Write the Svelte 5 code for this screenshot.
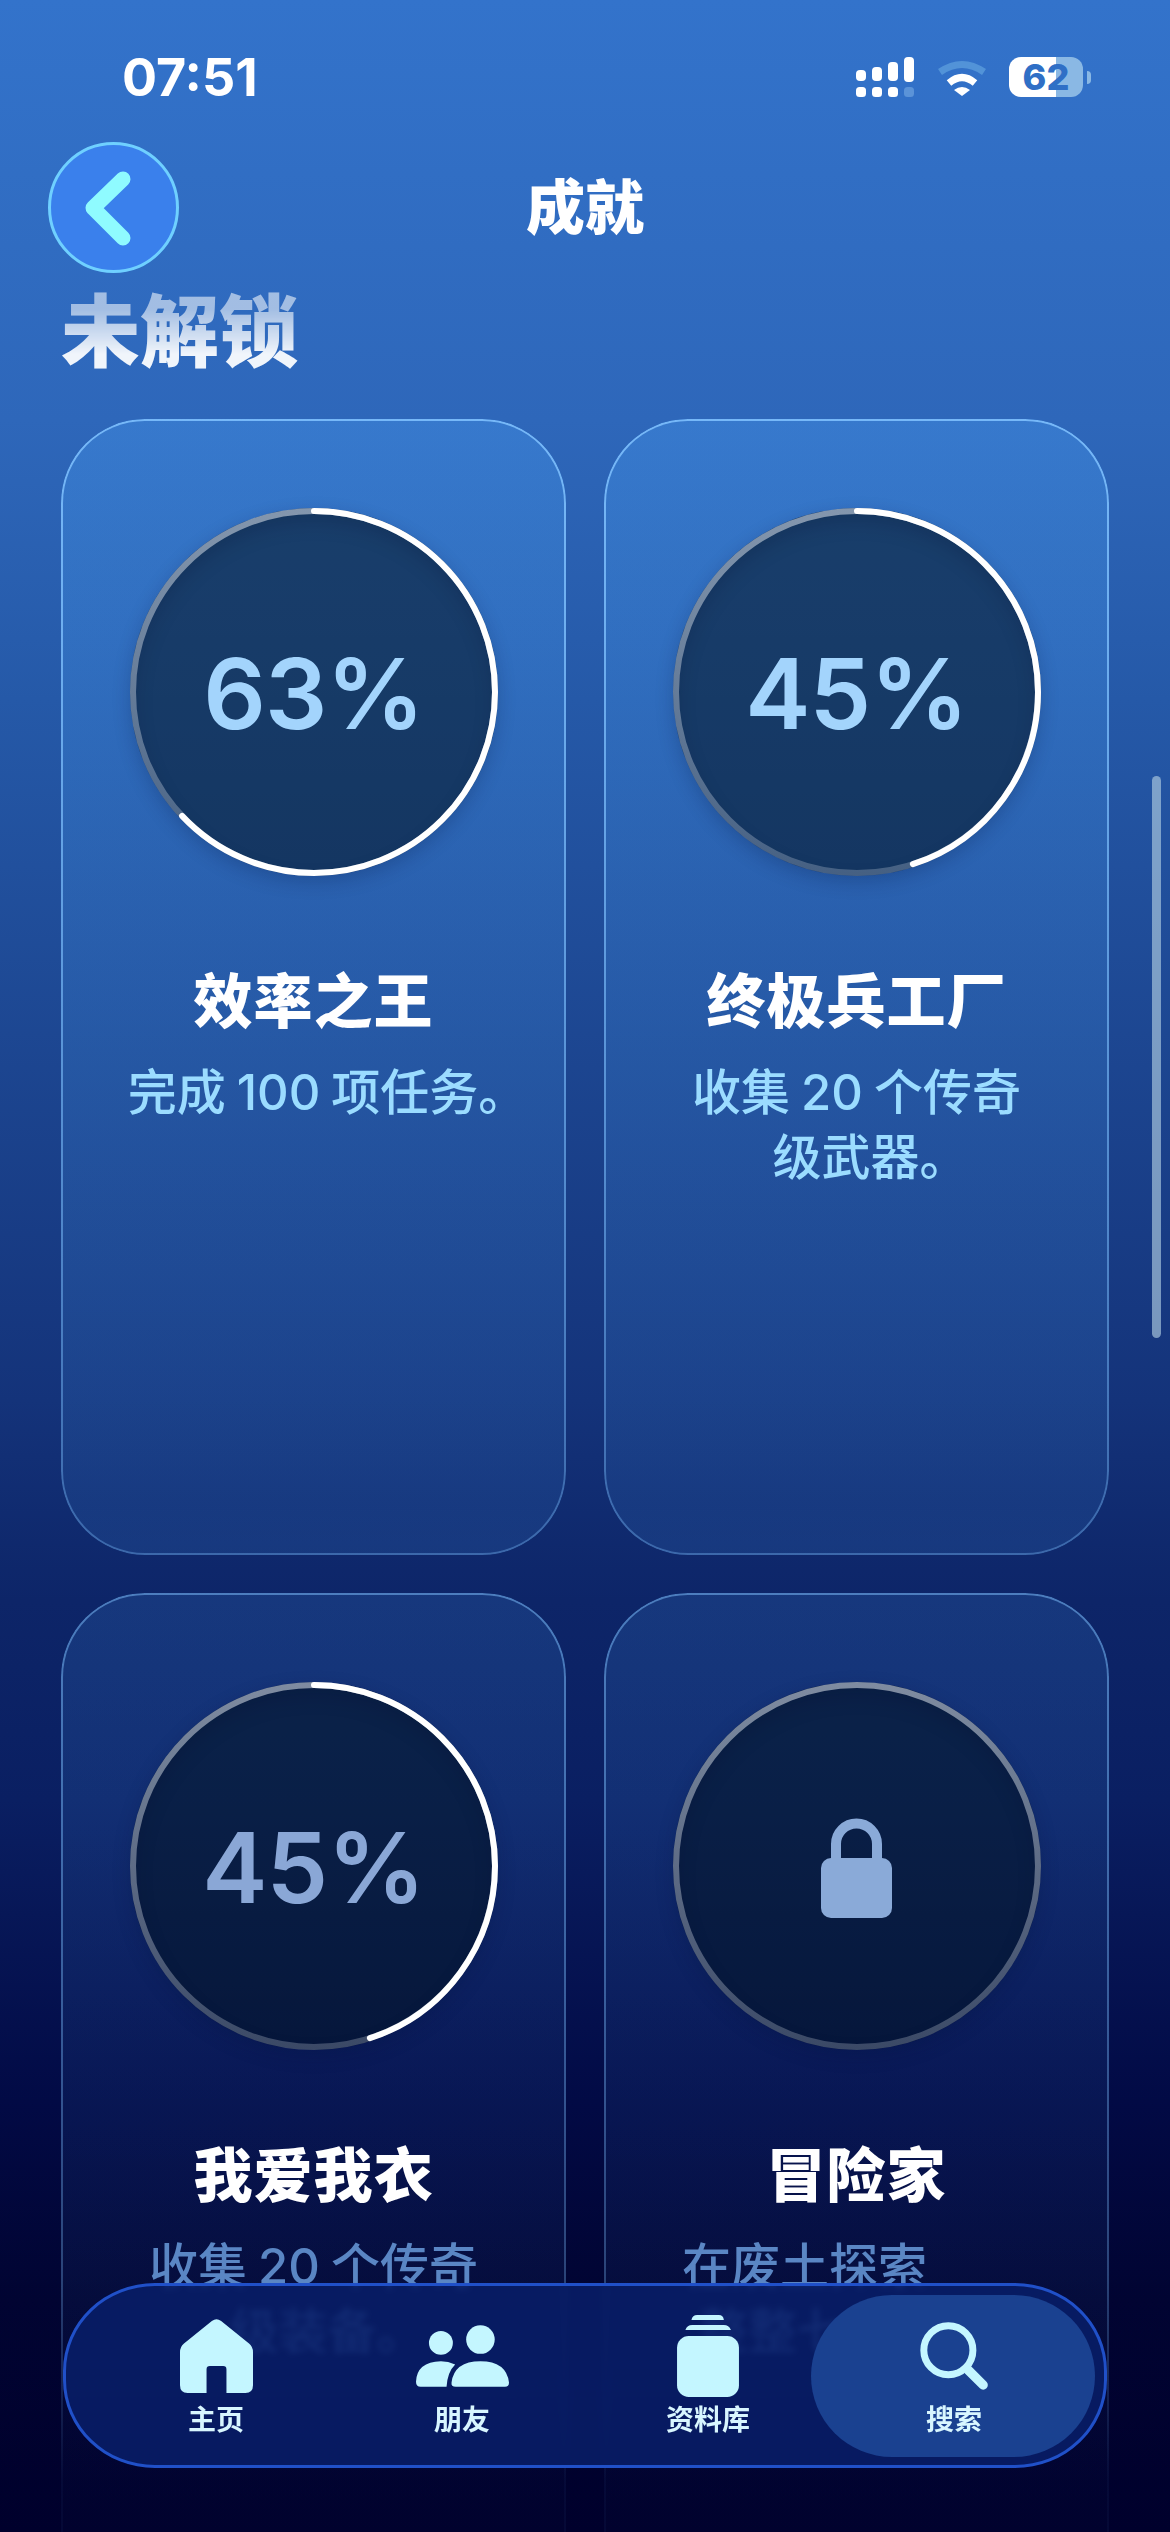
<script>
  const RING_R = 181;

  const cards = [
    { pct: 63, title: "效率之王", lines: ["完成 100 项任务。"] },
    { pct: 45, title: "终极兵工厂", lines: ["收集 20 个传奇", "级武器。"] },
    { pct: 45, title: "我爱我衣", lines: ["收集 20 个传奇", "级装备。"], dim: true },
    { pct: 0, title: "冒险家", lines: ["在废土探索", "整整七天以上。"], dim: true, locked: true },
  ];

  const tabs = [
    { key: "home", label: "主页" },
    { key: "friends", label: "朋友" },
    { key: "library", label: "资料库" },
    { key: "search", label: "搜索", active: true },
  ];
</script>

<div class="page">
  <header class="status">
    <span class="time">07:51</span>
    <div class="status-icons">
      <svg class="signal" viewBox="0 0 58 40" width="58" height="40">
        <g fill="#fff">
          <rect x="0" y="13" width="10" height="11" rx="4" />
          <rect x="16" y="10" width="10" height="14" rx="4" />
          <rect x="32" y="5" width="10" height="19" rx="4" />
          <rect x="48" y="0" width="10" height="25" rx="4" />
          <rect x="0" y="30" width="10" height="10" rx="3.5" />
          <rect x="16" y="30" width="10" height="10" rx="3.5" />
          <rect x="32" y="30" width="10" height="10" rx="3.5" />
          <rect x="48" y="30" width="10" height="10" rx="3.5" fill="#5b93d8" />
        </g>
      </svg>
      <svg class="wifi" viewBox="0 0 50 36" width="50" height="36">
        <path d="M3 12 Q25 -3 47 12" fill="none" stroke="#5293d8" stroke-width="7" />
        <path d="M12 23 Q25 12 38 23" fill="none" stroke="#fff" stroke-width="7" />
        <path d="M17 30 Q25 24 33 30 L25 36 Z" fill="#fff" />
      </svg>
      <div class="battery">62</div>
    </div>
  </header>

  <div class="nav">
    <button class="back" aria-label="返回">
      <svg viewBox="0 0 131 131" width="131" height="131">
        <path d="M75 37 L45 66 L75 96" fill="none" stroke="#8ffbff" stroke-width="15" stroke-linecap="round" stroke-linejoin="round" />
      </svg>
    </button>
    <h1>成就</h1>
  </div>

  <h2 class="section">未解锁</h2>

  <div class="grid">
    {#each cards as card}
      <article class="card" class:dim={card.dim} class:locked={card.locked}>
        <div class="ring">
          <svg viewBox="0 0 368 368" width="368" height="368">
            <defs>
              <linearGradient id="track" x1="0" y1="0" x2="0" y2="1">
                <stop offset="0" stop-color="#dfe6ee" stop-opacity="0.55" />
                <stop offset="1" stop-color="#dfe6ee" stop-opacity="0.25" />
              </linearGradient>
            </defs>
            <circle class="track" cx="184" cy="184" r={RING_R} stroke="url(#track)" />
            {#if !card.locked}
              <circle class="arc" cx="184" cy="184" r={RING_R} pathLength="100" stroke-dasharray="{card.pct} 100" transform="rotate(-90 184 184)" />
            {/if}
          </svg>
          {#if card.locked}
            <svg class="lock" viewBox="0 0 71 100" width="71" height="100">
              <path d="M15 42 V26 a20.500 20.500 0 0 1 41 0 V42" fill="none" stroke="#8aaad8" stroke-width="10" />
              <rect x="0" y="40" width="71" height="60" rx="10" fill="#8aaad8" />
            </svg>
          {:else}
            <span class="pct">{card.pct}%</span>
          {/if}
        </div>
        <h3>{card.title}</h3>
        <p>
          {#each card.lines as line}
            <span class:stop={line.endsWith("。")}>{line}</span>
          {/each}
        </p>
      </article>
    {/each}
  </div>

  <div class="scrollbar"></div>

  <nav class="tabbar">
    <div class="pill"></div>
    {#each tabs as tab}
      <div class="tab">
        <div class="tab-icon">
          {#if tab.key === "home"}
            <svg viewBox="0 0 220 223" width="73" height="74">
              <path d="M96 6 Q110 -4 124 6 L208 74 Q220 84 220 100 V200 Q220 223 197 223 H140 V152 Q140 142 130 142 H90 Q80 142 80 152 V223 H23 Q0 223 0 200 V100 Q0 84 12 74 Z" />
            </svg>
          {:else if tab.key === "friends"}
            <svg viewBox="0 0 280 185" width="93" height="62">
              <circle cx="75" cy="53" r="36" />
              <circle cx="194" cy="43" r="43" />
              <path d="M0 170 Q2 110 75 108 Q97 108 118 118 Q95 140 92 185 H14 Q0 185 0 170 Z" />
              <path d="M107 172 Q115 108 194 108 Q272 108 280 172 Q280 185 268 185 H120 Q105 185 107 172 Z" />
            </svg>
          {:else if tab.key === "library"}
            <svg viewBox="0 0 185 245" width="62" height="82">
              <path d="M43 15 Q46 0 60 0 H125 Q138 0 140 15 Z" />
              <path d="M25 45 Q30 30 45 30 H140 Q155 30 161 45 Z" />
              <rect x="0" y="63" width="185" height="182" rx="35" />
            </svg>
          {:else}
            <svg viewBox="0 0 204 205" width="68" height="68">
              <circle cx="85" cy="85" r="74" fill="none" stroke="#c4f6ff" stroke-width="21" />
              <path d="M145 145 L190 190" fill="none" stroke="#c4f6ff" stroke-width="28" stroke-linecap="round" />
            </svg>
          {/if}
        </div>
        <span class="tab-label">{tab.label}</span>
      </div>
    {/each}
  </nav>
</div>

<style>
  :global(body) {
    margin: 0;
    background: #00002c;
  }

  .page {
    position: relative;
    width: 1170px;
    height: 2532px;
    overflow: hidden;
    color: #fff;
    font-family: Inter, "Noto Sans CJK SC", sans-serif;
    background: linear-gradient(
      180deg,
      #3373cb 0,
      #2e67ba 420px,
      #2559a8 700px,
      #14337a 1400px,
      #0d2568 1600px,
      #0a1f62 1800px,
      #020a45 2100px,
      #010432 2300px,
      #00002c 2532px
    );
  }

  .status {
    height: 141px;
    padding: 51px 87px 0 122px;
    box-sizing: border-box;
    display: flex;
    justify-content: space-between;
    align-items: flex-start;
  }

  .time {
    font-size: 52px;
    font-weight: 700;
    line-height: 54px;
  }

  .status-icons {
    display: flex;
    align-items: flex-start;
    gap: 23px;
    padding-top: 6px;
  }

  .wifi {
    margin-top: 3px;
  }

  .signal,
  .wifi {
    display: block;
  }

  .battery {
    position: relative;
    width: 74px;
    height: 40px;
    border-radius: 12px;
    margin-left: -1px;
    background: linear-gradient(90deg, #fff 63%, #8ab8e4 63%);
    color: #2f6fc6;
    font-size: 36px;
    font-weight: 800;
    line-height: 40px;
    text-align: center;
  }

  .battery::after {
    content: "";
    position: absolute;
    left: 78px;
    top: 14px;
    width: 4px;
    height: 13px;
    border-radius: 0 6px 6px 0;
    background: #8ab8e4;
  }

  .nav {
    display: grid;
    grid-template-columns: 131px 1fr 131px;
    align-items: center;
    padding: 0 48px;
    height: 132px;
  }

  .back {
    width: 131px;
    height: 131px;
    padding: 0;
    border: 3px solid #6fd0ff;
    border-radius: 50%;
    box-sizing: border-box;
    background: #3a80ec;
    display: flex;
    align-items: center;
    justify-content: center;
    overflow: hidden;
  }

  .back svg {
    flex: none;
  }

  h1 {
    margin: 0;
    text-align: center;
    font-size: 59px;
    font-weight: 900;
    line-height: 1;
  }

  .section {
    margin: 11px 0 0 61px;
    height: 135px;
    box-sizing: border-box;
    font-size: 79px;
    font-weight: 900;
    line-height: 96px;
    color: #f0f5fb;
    -webkit-mask-image: linear-gradient(180deg, rgba(0, 0, 0, 0.6) 25px, #000 70px);
    mask-image: linear-gradient(180deg, rgba(0, 0, 0, 0.6) 25px, #000 70px);
  }

  .grid {
    display: grid;
    grid-template-columns: repeat(2, 505px);
    gap: 38px;
    padding-left: 61px;
  }

  .card {
    position: relative;
    height: 1136px;
    padding-top: 89px;
    box-sizing: border-box;
    border-radius: 84px;
    display: flex;
    flex-direction: column;
    align-items: center;
    text-align: center;
    background: linear-gradient(
        180deg,
        rgba(80, 170, 255, 0.27) 420px,
        rgba(80, 170, 255, 0.11) 1500px,
        rgba(80, 170, 255, 0.14) 1600px,
        rgba(80, 170, 255, 0.06) 2250px,
        rgba(80, 170, 255, 0.01) 2500px
      )
      fixed;
  }

  .card::before {
    content: "";
    position: absolute;
    inset: 0;
    padding: 2px;
    border-radius: inherit;
    background: linear-gradient(180deg, rgba(130, 195, 255, 0.85), rgba(130, 195, 255, 0.35));
    -webkit-mask: linear-gradient(#000 0 0) content-box, linear-gradient(#000 0 0);
    -webkit-mask-composite: xor;
    mask-composite: exclude;
  }

  .dim::before {
    background: linear-gradient(180deg, rgba(130, 195, 255, 0.5) 0, rgba(130, 195, 255, 0.3) 60%, rgba(130, 195, 255, 0.04) 78%);
  }

  .ring {
    position: relative;
    width: 368px;
    height: 368px;
    border-radius: 50%;
    background: rgba(4, 20, 36, 0.56);
    box-shadow:
      0 6px 18px rgba(0, 20, 60, 0.22),
      inset 0 10px 22px rgba(0, 10, 30, 0.22);
    display: flex;
    align-items: center;
    justify-content: center;
  }

  .ring > svg:first-child {
    position: absolute;
    inset: 0;
  }

  .track,
  .arc {
    fill: none;
    stroke-width: 6;
  }

  .arc {
    stroke: #fff;
    stroke-linecap: round;
  }

  .pct {
    margin-top: 3px;
    font-size: 98px;
    font-weight: 600;
    letter-spacing: -1px;
    line-height: 1;
    color: #a3d4fc;
  }

  .dim .pct {
    color: #8aa7d6;
  }

  .lock {
    margin-top: 3px;
  }

  h3 {
    margin: 90px 0 0;
    font-size: 59px;
    font-weight: 900;
    letter-spacing: 1px;
    line-height: 72px;
  }

  p {
    margin: 22px 0 0;
    font-size: 49px;
    font-weight: 500;
    word-spacing: -2px;
    line-height: 65px;
    color: #9bdcff;
  }

  .dim p {
    color: #5a86c4;
  }

  p span {
    display: block;
  }

  /* the full stop's em box is mostly empty, so it should not count when centring */
  p span.stop {
    margin-right: -28px;
  }

  .locked p span:first-child {
    padding-right: 104px;
  }

  .scrollbar {
    position: absolute;
    left: 1152px;
    top: 776px;
    width: 9px;
    height: 562px;
    border-radius: 5px;
    background: rgba(175, 205, 225, 0.65);
  }

  .tabbar {
    position: absolute;
    left: 63px;
    top: 2283px;
    width: 1044px;
    height: 185px;
    box-sizing: border-box;
    padding: 28px 27px 0;
    border: 3px solid #2050c8;
    border-radius: 92px / 88px;
    background: rgba(8, 30, 104, 0.88);
    -webkit-backdrop-filter: blur(3px);
    backdrop-filter: blur(3px);
    display: grid;
    grid-template-columns: repeat(4, 1fr);
  }

  .pill {
    position: absolute;
    right: 9px;
    top: 9px;
    bottom: 8px;
    width: 284px;
    border-radius: 82px;
    background: #1a4190;
  }

  .tab {
    position: relative;
    display: flex;
    flex-direction: column;
    align-items: center;
  }

  .tab-icon {
    height: 84px;
    display: flex;
    align-items: center;
    justify-content: center;
  }

  .tab-icon svg {
    display: block;
    fill: #c4f6ff;
  }

  .tab-label {
    margin-top: 6px;
    font-size: 28px;
    font-weight: 700;
    line-height: 32px;
    color: #d8f6ff;
  }
</style>
